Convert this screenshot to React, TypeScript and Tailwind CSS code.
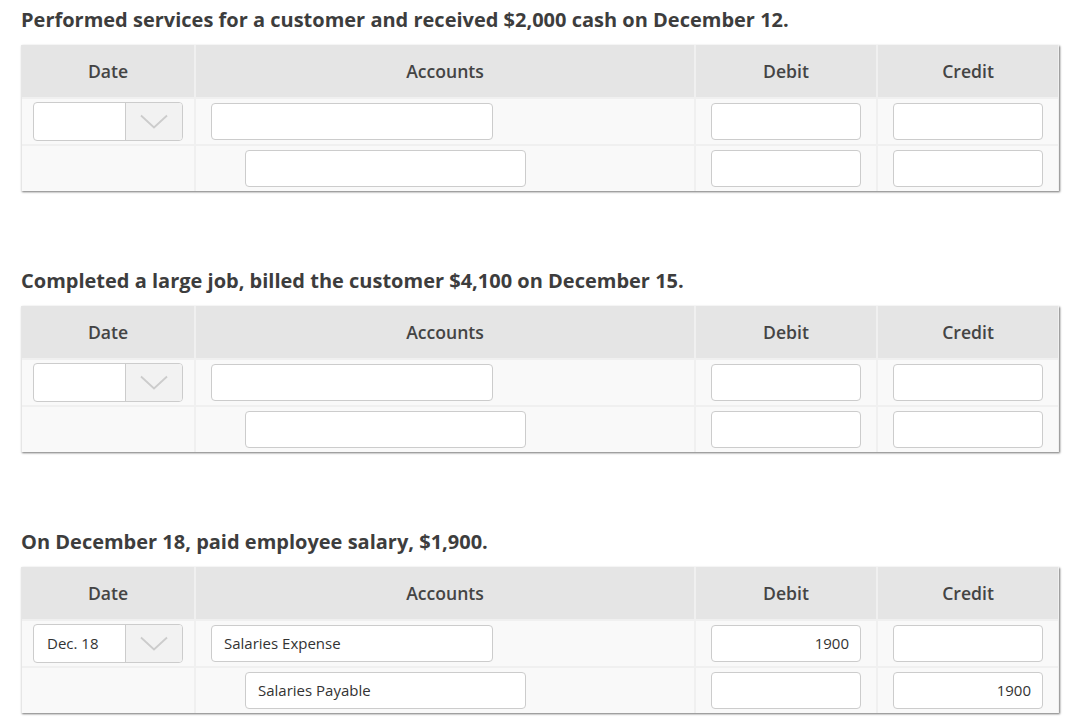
import React from "react";

type Row = { date?: string; acct: string; debit: string; credit: string; indent?: boolean; hasDate: boolean };

function Chevron() {
  return (
    <svg width="28" height="15" viewBox="0 0 28 15" fill="none">
      <path d="M1 1.5 L14 13.5 L27 1.5" stroke="#cccccc" strokeWidth="1.8" />
    </svg>
  );
}

function Input({ value, right, className }: { value: string; right?: boolean; className: string }) {
  return (
    <div
      className={`h-[37px] rounded-[4px] border border-[#cccccc] bg-white flex items-center pl-[12px] pr-[11px] text-[15px] text-[#333] ${right ? "justify-end" : ""} ${className}`}
    >
      {value}
    </div>
  );
}

function Section({ title, rows, mt }: { title: string; rows: Row[]; mt: string }) {
  return (
    <div className={mt}>
      <h3 className="text-[20px] font-bold text-[#3d3d3d] leading-[27px]">{title}</h3>
      <div className="mt-[12px] w-[1038px] bg-[#f0f0f0] shadow-[1px_1px_2px_rgba(0,0,0,0.55)] border-l border-[#e6e6e6] grid grid-cols-[172px_498px_180px_180px] gap-[2px]">
        {["Date", "Accounts", "Debit", "Credit"].map((h) => (
          <div key={h} className="h-[52px] bg-[#e5e5e5] flex items-center justify-center text-[17.6px] font-semibold text-[#444]">
            {h}
          </div>
        ))}
        {rows.map((r, i) => (
          <React.Fragment key={i}>
            <div className="h-[45px] bg-[#f9f9f9] flex items-center pl-[11px]">
              {r.hasDate && (
                <div className="h-[39px] w-[150px] rounded-[4px] border border-[#cccccc] bg-white flex overflow-hidden">
                  <div className="flex-1 flex items-center pl-[13px] text-[15px] text-[#333]">{r.date}</div>
                  <div className="w-[57px] border-l border-[#cccccc] bg-[#f2f2f2] flex items-center justify-center">
                    <Chevron />
                  </div>
                </div>
              )}
            </div>
            <div className={`h-[45px] bg-[#f9f9f9] flex items-center ${r.indent ? "pl-[49px]" : "pl-[15px]"}`}>
              <Input value={r.acct} className={r.indent ? "w-[281px]" : "w-[282px]"} />
            </div>
            <div className="h-[45px] bg-[#f9f9f9] flex items-center pl-[15px]">
              <Input value={r.debit} right className="w-[150px]" />
            </div>
            <div className="h-[45px] bg-[#f9f9f9] flex items-center pl-[15px]">
              <Input value={r.credit} right className="w-[150px]" />
            </div>
          </React.Fragment>
        ))}
      </div>
    </div>
  );
}

export default function App() {
  const empty: Row[] = [
    { acct: "", debit: "", credit: "", hasDate: true },
    { acct: "", debit: "", credit: "", indent: true, hasDate: false },
  ];
  const filled: Row[] = [
    { date: "Dec. 18", acct: "Salaries Expense", debit: "1900", credit: "", hasDate: true },
    { acct: "Salaries Payable", debit: "", credit: "1900", indent: true, hasDate: false },
  ];
  return (
    <div className="bg-white min-h-[723px] pl-[21px] pt-[6px]" style={{ fontFamily: '"Open Sans", "Noto Sans", sans-serif' }}>
      <Section title="Performed services for a customer and received $2,000 cash on December 12." rows={empty} mt="" />
      <Section title="Completed a large job, billed the customer $4,100 on December 15." rows={empty} mt="mt-[76px]" />
      <Section title="On December 18, paid employee salary, $1,900." rows={filled} mt="mt-[76px]" />
    </div>
  );
}
